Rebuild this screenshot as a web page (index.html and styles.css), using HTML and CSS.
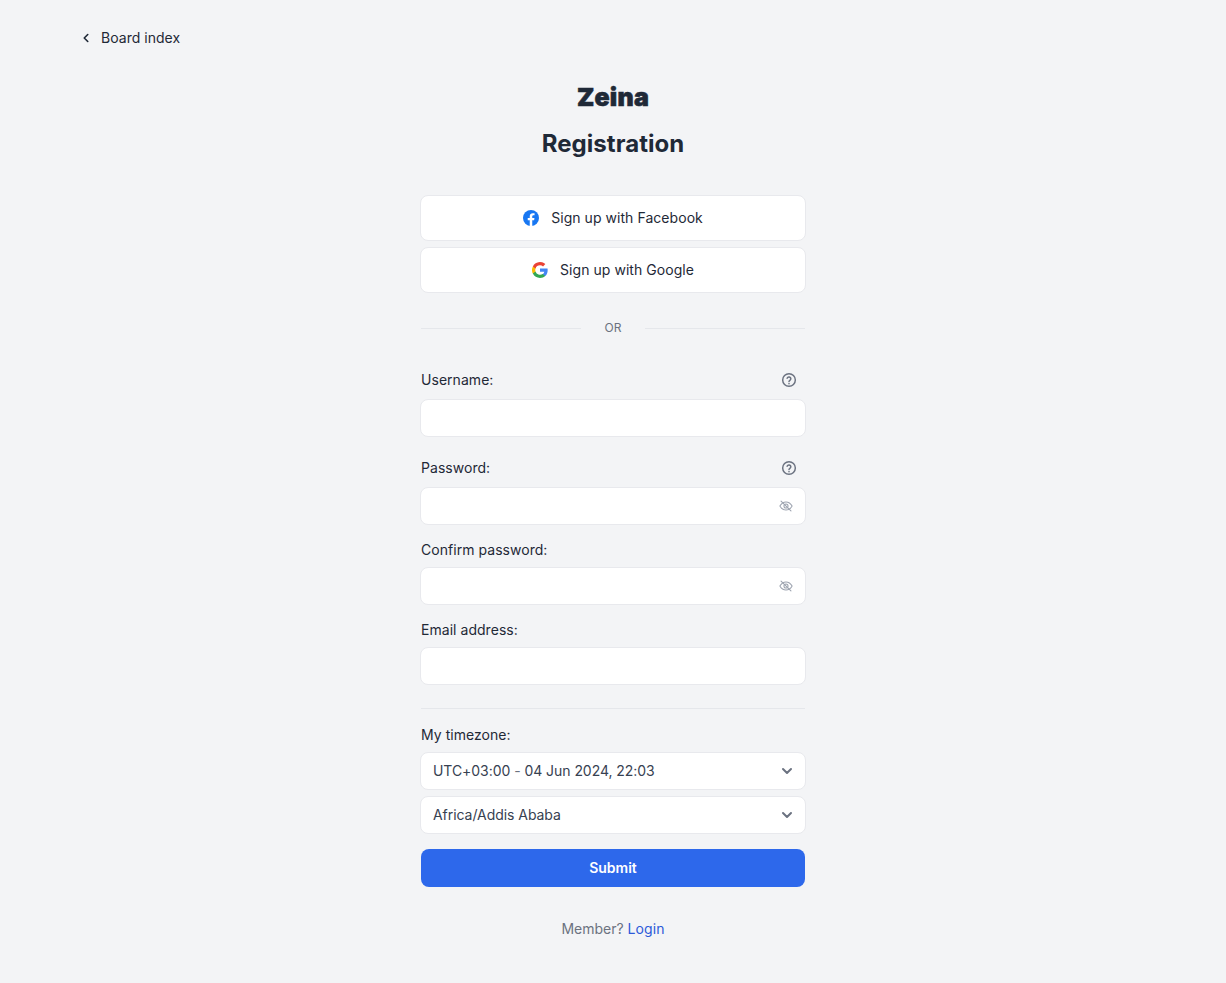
FILE: index.html
```html
<!DOCTYPE html>
<html lang="en">
<head>
<meta charset="utf-8">
<title>Registration</title>
<link rel="stylesheet" href="styles.css">
</head>
<body>
<header class="topbar">
  <a class="back" href="#">
    <svg class="back-icon" viewBox="0 0 20 20" width="14" height="14"><path d="M12.500 5l-5 5 5 5" fill="none" stroke="currentColor" stroke-width="2.300" stroke-linecap="round" stroke-linejoin="round"/></svg>
    <span>Board index</span>
  </a>
</header>
<main class="wrap">
  <div class="logo">Zeina</div>
  <h1 class="title">Registration</h1>
  <div class="socials">
    <a class="social" href="#">
      <svg width="16" height="16" viewBox="0 0 24 24"><circle cx="12" cy="12" r="12" fill="#1877f2"/><path d="M16.670 15.470l.53-3.470h-3.330V9.750c0-.95.47-1.870 1.960-1.870h1.510V4.920s-1.370-.23-2.680-.23c-2.740 0-4.530 1.660-4.530 4.670V12H7.080v3.470h3.050v8.390a12 12 0 0 0 3.740 0v-8.390z" fill="#fff"/></svg>
      <span>Sign up with Facebook</span>
    </a>
    <a class="social" href="#">
      <svg width="16" height="16" viewBox="0 0 24 24"><path d="M23.500 12.270c0-.85-.08-1.670-.22-2.450H12v4.640h6.450a5.500 5.500 0 0 1-2.390 3.610v3h3.870c2.260-2.090 3.570-5.160 3.570-8.800z" fill="#4285f4"/><path d="M12 24c3.240 0 5.950-1.070 7.930-2.910l-3.870-3A7.200 7.200 0 0 1 5.300 14.300H1.300v3.100A12 12 0 0 0 12 24z" fill="#34a853"/><path d="M5.300 14.300a7.200 7.200 0 0 1 0-4.600V6.600h-4a12 12 0 0 0 0 10.800z" fill="#fbbc05"/><path d="M12 4.770c1.760 0 3.340.61 4.580 1.800l3.440-3.440A12 12 0 0 0 1.300 6.600l4 3.100A7.150 7.150 0 0 1 12 4.770z" fill="#ea4335"/></svg>
      <span>Sign up with Google</span>
    </a>
  </div>
  <div class="or"><span class="or-line"></span><span class="or-text">OR</span><span class="or-line"></span></div>
  <form class="form">
    <div class="label-row label-row-first">
      <label class="label">Username:</label>
      <svg class="help" width="16" height="16" viewBox="0 0 24 24" fill="none" stroke="currentColor" stroke-width="2.200" stroke-linecap="round"><circle cx="12" cy="12" r="9.500"/><path d="M9.200 9.300a2.900 2.900 0 0 1 5.600 1c0 1.900-2.800 2.400-2.800 4"/><path d="M12 17.400v.1"/></svg>
    </div>
    <div class="input input-wide"></div>
    <div class="label-row label-row-pw">
      <label class="label">Password:</label>
      <svg class="help" width="16" height="16" viewBox="0 0 24 24" fill="none" stroke="currentColor" stroke-width="2.200" stroke-linecap="round"><circle cx="12" cy="12" r="9.500"/><path d="M9.200 9.300a2.900 2.900 0 0 1 5.600 1c0 1.900-2.800 2.400-2.800 4"/><path d="M12 17.400v.1"/></svg>
    </div>
    <div class="input input-wide input-icon">
      <svg class="eye" width="14" height="14" viewBox="0 0 24 24" fill="none" stroke="currentColor" stroke-width="1.800" stroke-linecap="round" stroke-linejoin="round"><path d="M1.500 12S5.500 5 12 5s10.500 7 10.500 7-4 7-10.500 7S1.500 12 1.500 12z"/><circle cx="12" cy="12" r="3.500"/><path d="M3.500 3.500l17 17"/></svg>
    </div>
    <div class="label-row label-row-tight"><label class="label">Confirm password:</label></div>
    <div class="input input-icon">
      <svg class="eye" width="14" height="14" viewBox="0 0 24 24" fill="none" stroke="currentColor" stroke-width="1.800" stroke-linecap="round" stroke-linejoin="round"><path d="M1.500 12S5.500 5 12 5s10.500 7 10.500 7-4 7-10.500 7S1.500 12 1.500 12z"/><circle cx="12" cy="12" r="3.500"/><path d="M3.500 3.500l17 17"/></svg>
    </div>
    <div class="label-row label-row-tight"><label class="label">Email address:</label></div>
    <div class="input"></div>
    <hr class="rule">
    <div class="label-row label-row-tz"><label class="label">My timezone:</label></div>
    <div class="select">
      <span>UTC+03:00 <span class="dash">-</span> 04 Jun 2024, 22:03</span>
      <svg class="chev" width="16" height="16" viewBox="0 0 20 20" fill="none" stroke="currentColor" stroke-width="2.500" stroke-linecap="round" stroke-linejoin="round"><path d="M5 7.500l5 5 5-5"/></svg>
    </div>
    <div class="select select-second">
      <span>Africa/Addis Ababa</span>
      <svg class="chev" width="16" height="16" viewBox="0 0 20 20" fill="none" stroke="currentColor" stroke-width="2.500" stroke-linecap="round" stroke-linejoin="round"><path d="M5 7.500l5 5 5-5"/></svg>
    </div>
    <button class="submit" type="button">Submit</button>
  </form>
  <p class="member">Member? <a class="login" href="#">Login</a></p>
</main>
</body>
</html>
```
FILE: styles.css
```css
* { box-sizing: border-box; }
html, body { margin: 0; padding: 0; }
body {
  background: #f3f4f6;
  color: #1f2937;
  font-family: Inter, "Liberation Sans", sans-serif;
  font-size: 14px;
  line-height: 20px;
  min-height: 983px;
}
a { text-decoration: none; color: inherit; }
.topbar { padding: 28px 0 0 79px; height: 48px; }
.back { display: inline-flex; align-items: center; gap: 8px; color: #1f2937; letter-spacing: 0.03px; }
.wrap { width: 384px; margin: 0 auto; }
.logo {
  margin-top: 33px;
  height: 32px;
  line-height: 32px;
  text-align: center;
  font-size: 25px;
  font-weight: 900;
  color: #1f2937;
  letter-spacing: 0.2px;
  -webkit-text-stroke: 0.6px #1f2937;
}
.title {
  margin: 15px 0 0;
  font-size: 24px;
  line-height: 32px;
  font-weight: 700;
  letter-spacing: 0.06px;
  text-align: center;
  color: #1f2937;
}
.socials { margin: 35px -1px 0; display: flex; flex-direction: column; gap: 6px; }
.social {
  height: 46px;
  background: #fff;
  border: 1px solid #e8e9ed;
  border-radius: 8px;
  display: flex;
  align-items: center;
  justify-content: center;
  gap: 12px;
  color: #1f2937;
  letter-spacing: 0.05px;
}
.or { margin-top: 25px; display: flex; align-items: center; gap: 24px; height: 20px; }
.or-line { flex: 1; height: 1px; background: #e5e7eb; }
.or-text { font-size: 12px; font-weight: 400; color: #6b7280; }
.form { display: block; }
.label-row { display: flex; align-items: center; justify-content: space-between; height: 20px; }
.label-row-first { margin-top: 32px; }
.label-row-pw { margin-top: 21px; }
.label-row-tight { margin-top: 15px; }
.label-row-tz { margin-top: 16px; }
.label { color: #1f2937; font-weight: 400; letter-spacing: 0.04px; }
.help { color: #6b7280; margin-right: 8px; }
.input {
  margin: 7px -1px 0;
  height: 38px;
  background: #fff;
  border: 1px solid #e8e9ed;
  border-radius: 8px;
}
.input-wide { margin-top: 9px; }
.input-icon { display: flex; align-items: center; justify-content: flex-end; padding-right: 12px; }
.eye { color: #9ca3af; }
.rule { margin: 23px 0 0; border: 0; height: 1px; background: #e5e7eb; }
.select {
  margin: 7px -1px 0;
  height: 38px;
  background: #fff;
  border: 1px solid #e8e9ed;
  border-radius: 8px;
  display: flex;
  align-items: center;
  justify-content: space-between;
  padding: 0 10px 0 12px;
  color: #374151;
  letter-spacing: -0.05px;
}
.select-second { margin-top: 6px; }
.dash { color: #6b7280; }
.chev { color: #6b7280; }
.submit {
  display: block;
  width: 100%;
  margin-top: 15px;
  height: 38px;
  padding: 0 0 2px;
  border: 0;
  border-radius: 8px;
  background: #2d68eb;
  color: #fff;
  font-family: inherit;
  font-size: 14px;
  font-weight: 600;
}
.member { margin: 32px 0 0; text-align: center; color: #6b7280; }
.login { color: #2d5ad9; font-weight: 400; letter-spacing: 0.1px; }
```
